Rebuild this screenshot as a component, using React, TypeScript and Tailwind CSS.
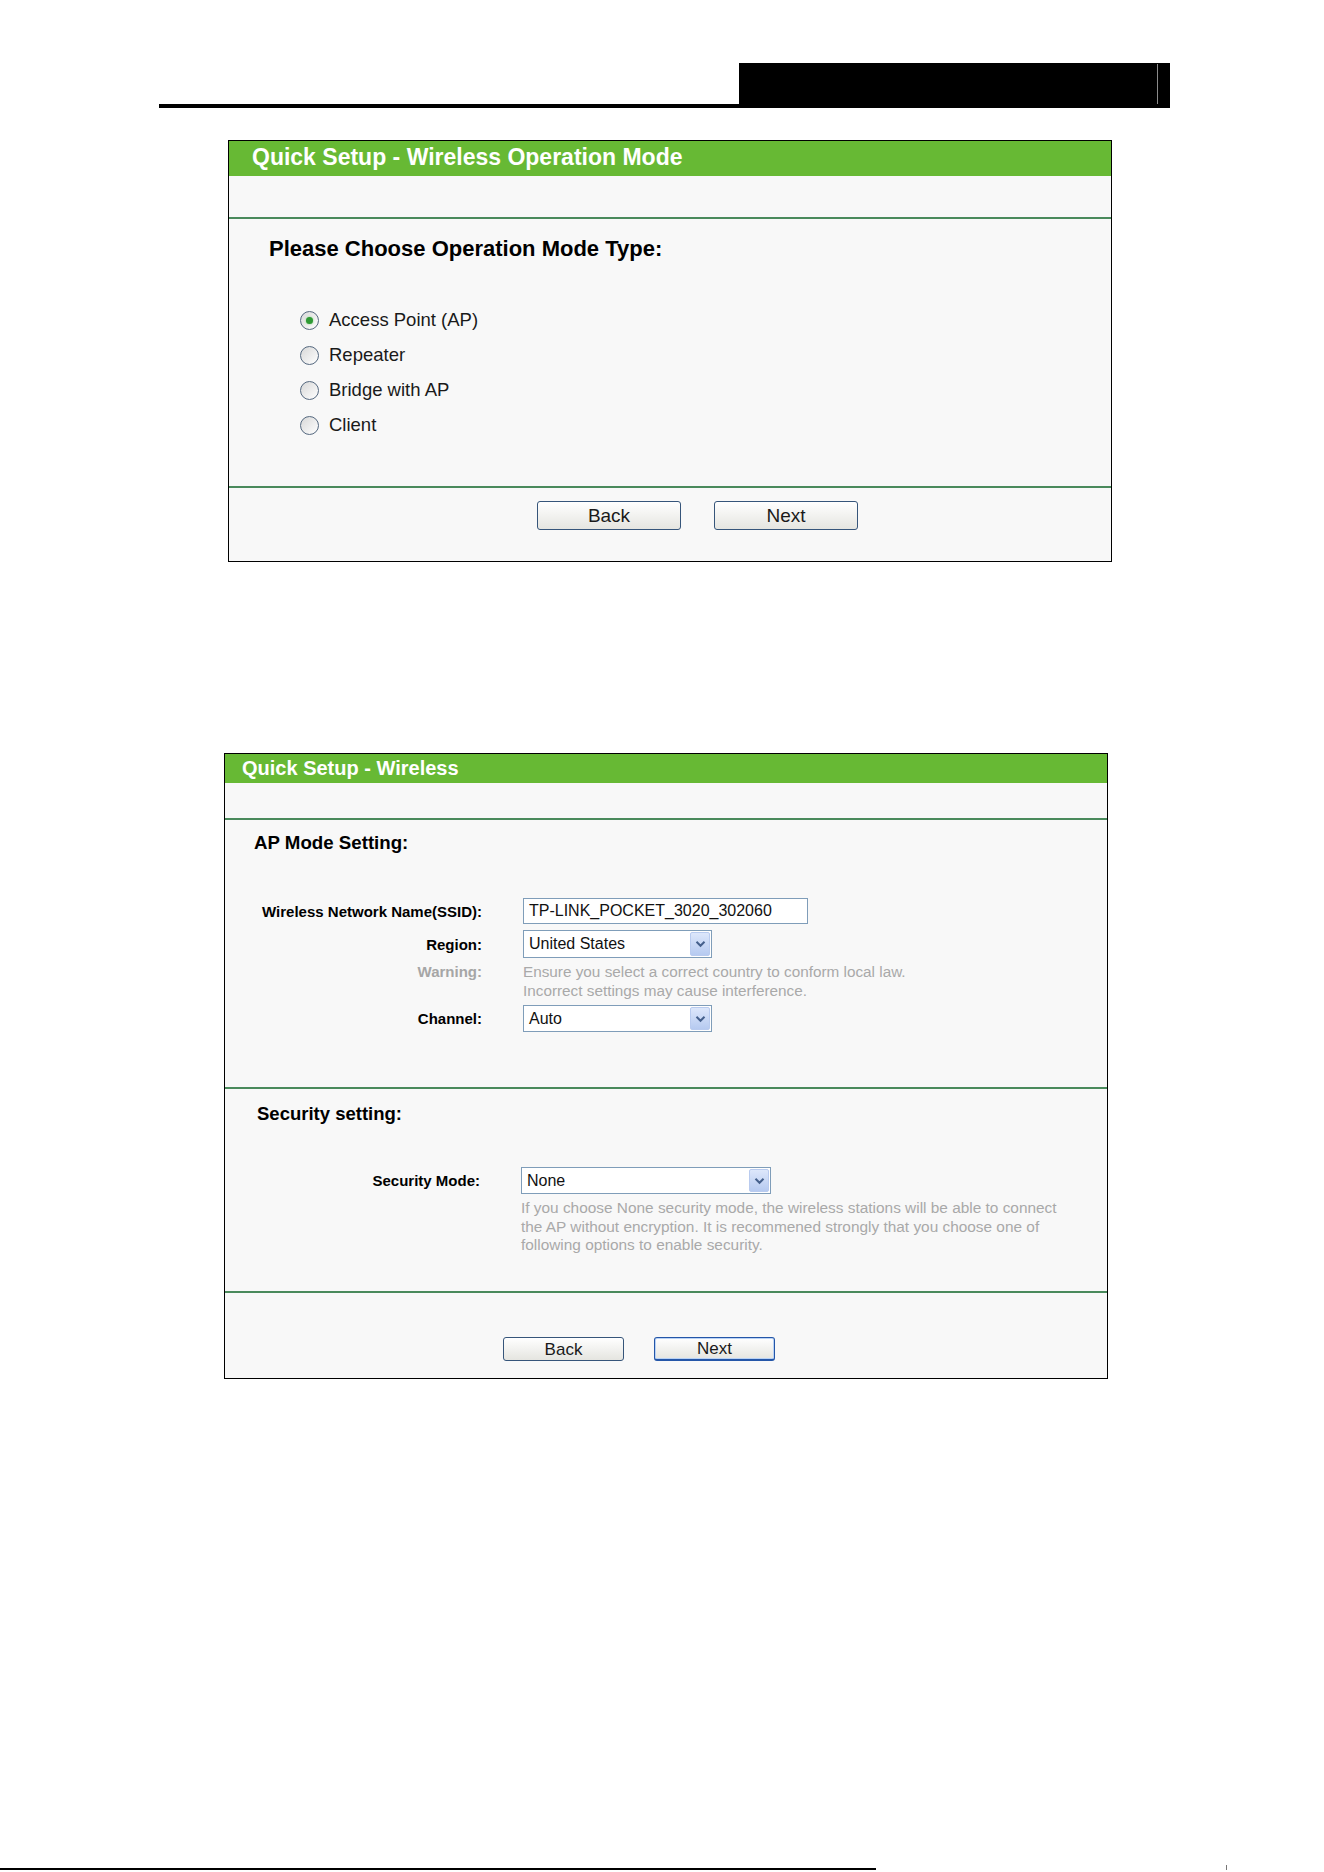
import React from "react";

const FONT = "font-['Liberation_Sans',Arial,Helvetica,sans-serif]";

function Chevron() {
  return (
    <svg width="11" height="8" viewBox="0 0 11 8" className="block">
      <path d="M1.5 1.8 L5.5 5.8 L9.5 1.8" fill="none" stroke="#45608c" strokeWidth="2" />
    </svg>
  );
}

function Select({ value, width }: { value: string; width: string }) {
  return (
    <div
      className={`${width} h-full border border-[#7f9db9] bg-white flex items-center justify-between`}
    >
      <span className="pl-[5px] text-[16px] text-[#111] leading-none">{value}</span>
      <div className="h-[calc(100%-2px)] w-[20px] mr-px rounded-[2px] border border-[#b9cbef] bg-gradient-to-b from-[#dde7fb] to-[#b6caf0] flex items-center justify-center">
        <Chevron />
      </div>
    </div>
  );
}

function Radio({ checked, label }: { checked?: boolean; label: string }) {
  return (
    <div className="h-[35px] flex items-center">
      <div className="ml-[31px] w-[19px] h-[19px] rounded-full border-[1.5px] border-[#55687f] bg-gradient-to-br from-[#d8d8d8] to-white flex items-center justify-center">
        {checked && (
          <div className="w-[7px] h-[7px] rounded-full bg-[#2f9a35] shadow-[0_0_2px_#7fd07f]" />
        )}
      </div>
      <span className="ml-[10px] text-[18.5px] text-[#1a1a1a] leading-none">{label}</span>
    </div>
  );
}

function Btn({
  label,
  size,
  focused,
}: {
  label: string;
  size: "lg" | "sm";
  focused?: boolean;
}) {
  const dims = size === "lg" ? "w-[144px] h-[29px] text-[19px]" : "w-[121px] h-[24px] text-[17px]";
  const edge = focused
    ? "border-[#2456a8] border-b-2 shadow-[inset_0_0_0_1px_#b9d2f5]"
    : "border-[#36557a]";
  return (
    <div
      className={`${dims} ${edge} border rounded-[3px] bg-gradient-to-b from-white to-[#e5e5e0] flex items-center justify-center text-[#1a1a1a] leading-none`}
    >
      {label}
    </div>
  );
}

function Sep() {
  return <div className="h-[2px] bg-[#4a8a5c]" />;
}

function FormRow({
  label,
  labelWidth,
  height,
  muted,
  children,
  top,
}: {
  label: string;
  labelWidth: string;
  height?: string;
  muted?: boolean;
  top?: boolean;
  children: React.ReactNode;
}) {
  return (
    <div className={`flex ${top ? "items-start" : "items-center"} ${height ?? ""}`}>
      <div
        className={`${labelWidth} shrink-0 text-right text-[15px] font-bold leading-[19px] ${
          muted ? "text-[#a6a6a6]" : "text-black"
        }`}
      >
        {label}
      </div>
      <div className="ml-[41px] h-full flex">{children}</div>
    </div>
  );
}

export default function App() {
  return (
    <div className={`${FONT} bg-white min-h-[1872px] w-[1324px] flex flex-col`}>
      {/* running page header */}
      <div className="mt-[63px] ml-[159px] w-[1011px] h-[45px] flex items-end">
        <div className="flex-1 h-[4px] bg-black" />
        <div className="w-[431px] h-full bg-black flex justify-end pr-[12px] pt-px pb-[4px]">
          <div className="w-px h-full bg-[#8a8a8a]" />
        </div>
      </div>

      {/* Wireless Operation Mode panel */}
      <div className="mt-[32px] ml-[228px] w-[884px] border border-black bg-[#f8f8f8] flex flex-col">
        <div className="h-[35px] bg-[#67b934] flex items-center pl-[23px] pb-[3px]">
          <span className="text-white text-[23px] font-bold leading-none">
            Quick Setup - Wireless Operation Mode
          </span>
        </div>
        <div className="h-[41px]" />
        <Sep />
        <div className="h-[267px] pl-[40px] pt-[17px]">
          <div className="text-[22px] font-bold leading-[25px] text-black">
            Please Choose Operation Mode Type:
          </div>
          <div className="mt-[42px] flex flex-col">
            <Radio checked label="Access Point (AP)" />
            <Radio label="Repeater" />
            <Radio label="Bridge with AP" />
            <Radio label="Client" />
          </div>
        </div>
        <Sep />
        <div className="h-[73px] pt-[13px] pl-[308px] flex items-start gap-[33px]">
          <Btn label="Back" size="lg" />
          <Btn label="Next" size="lg" />
        </div>
      </div>

      {/* Wireless settings panel */}
      <div className="mt-[191px] ml-[224px] w-[884px] border border-black bg-[#f8f8f8] flex flex-col">
        <div className="h-[29px] bg-[#67b934] flex items-center pl-[17px] pb-[2px]">
          <span className="text-white text-[20px] font-bold leading-none">
            Quick Setup - Wireless
          </span>
        </div>
        <div className="h-[35px]" />
        <Sep />
        <div className="h-[267px] flex flex-col">
          <div className="pl-[29px] pt-[12px] text-[18.7px] font-bold leading-[22px] text-black">
            AP Mode Setting:
          </div>
          <div className="mt-[44px]">
            <FormRow label="Wireless Network Name(SSID):" labelWidth="w-[257px]" height="h-[26px]">
              <div className="w-[285px] h-full border border-[#7f9db9] bg-white flex items-center pl-[5px] text-[16px] text-[#111] leading-none">
                TP-LINK_POCKET_3020_302060
              </div>
            </FormRow>
          </div>
          <div className="mt-[6px]">
            <FormRow label="Region:" labelWidth="w-[257px]" height="h-[28px]">
              <Select value="United States" width="w-[189px]" />
            </FormRow>
          </div>
          <div className="mt-[4px]">
            <FormRow label="Warning:" labelWidth="w-[257px]" muted top>
              <div className="text-[15.3px] leading-[19px] text-[#a9a9a9]">
                <div className="whitespace-nowrap">
                  Ensure you select a correct country to conform local law.
                </div>
                <div className="whitespace-nowrap">Incorrect settings may cause interference.</div>
              </div>
            </FormRow>
          </div>
          <div className="mt-[5px]">
            <FormRow label="Channel:" labelWidth="w-[257px]" height="h-[27px]">
              <Select value="Auto" width="w-[189px]" />
            </FormRow>
          </div>
        </div>
        <Sep />
        <div className="h-[202px] flex flex-col">
          <div className="pl-[32px] pt-[14px] text-[18.5px] font-bold leading-[22px] text-black">
            Security setting:
          </div>
          <div className="mt-[42px]">
            <FormRow label="Security Mode:" labelWidth="w-[255px]" height="h-[27px]">
              <Select value="None" width="w-[250px]" />
            </FormRow>
          </div>
          <div className="mt-[5px] ml-[296px] text-[15.4px] leading-[18.5px] text-[#a9a9a9]">
            <div className="whitespace-nowrap">
              If you choose None security mode, the wireless stations will be able to connect
            </div>
            <div className="whitespace-nowrap">
              the AP without encryption. It is recommened strongly that you choose one of
            </div>
            <div className="whitespace-nowrap">following options to enable security.</div>
          </div>
        </div>
        <Sep />
        <div className="h-[85px] pt-[44px] pl-[278px] flex items-start gap-[30px]">
          <Btn label="Back" size="sm" />
          <Btn label="Next" size="sm" focused />
        </div>
      </div>

      {/* running page footer */}
      <div className="mt-auto mb-[2px] flex items-end">
        <div className="w-[876px] h-[2px] bg-black" />
        <div className="ml-[350px] w-px h-[5px] bg-[#777]" />
      </div>
    </div>
  );
}
